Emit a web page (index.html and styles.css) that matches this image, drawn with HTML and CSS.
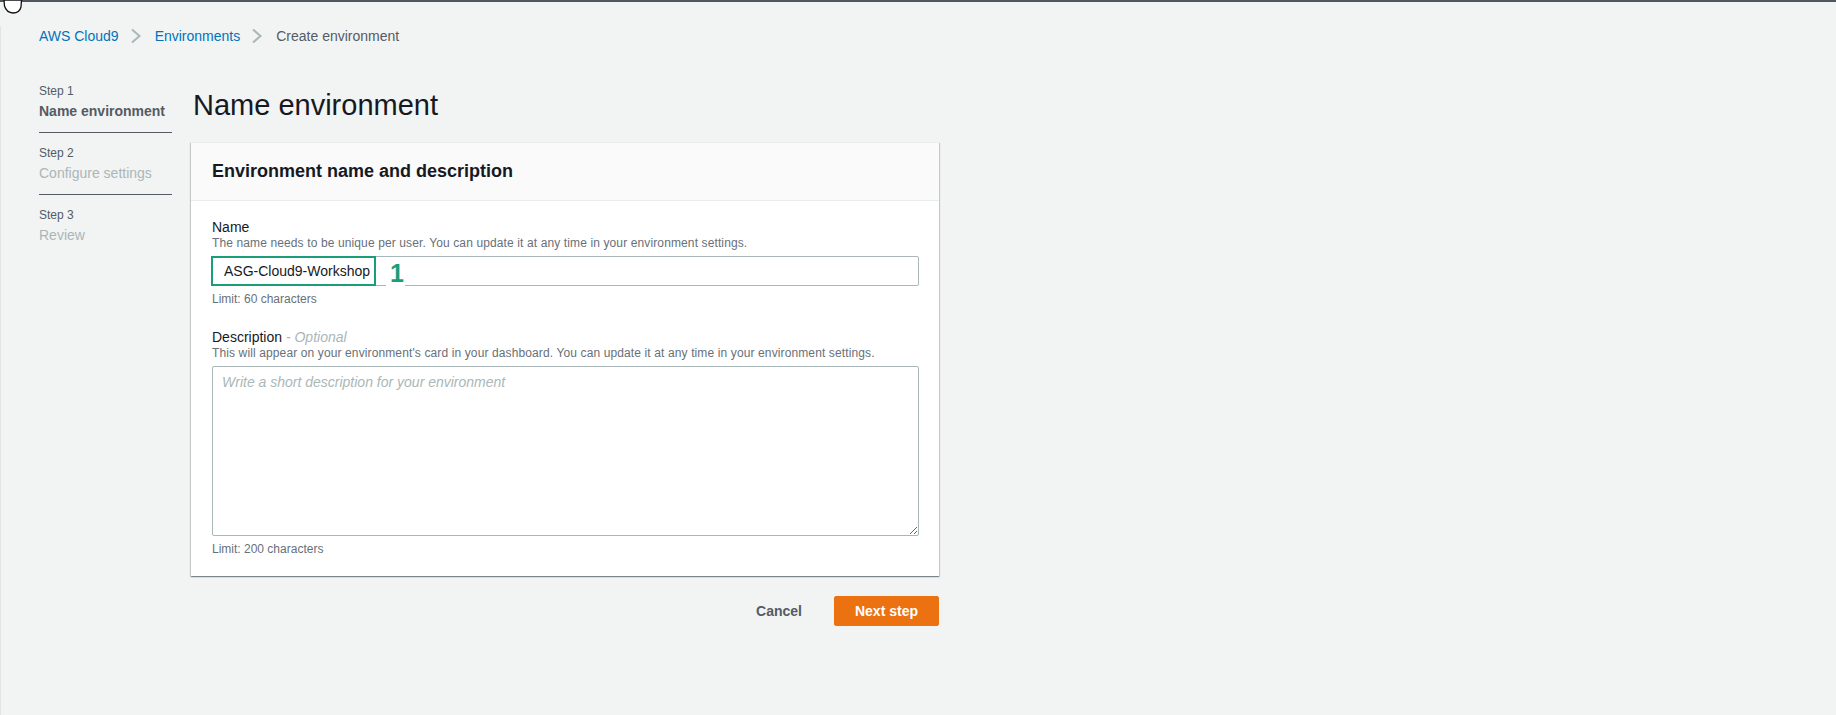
FILE: index.html
```html
<!DOCTYPE html>
<html>
<head>
    <title>Create environment - AWS Cloud9</title>
    <link rel="stylesheet" href="styles.css">
</head>
<body>
    <div class="topline"></div>

    <!-- mouse pointer resting on the top edge -->
    <svg class="pointer" width="24" height="15" viewBox="0 0 24 15">
        <path d="M4 0 L4.5 6 Q6.5 12.5 13 13 Q19.5 13 21 7 L21.5 0 Z" fill="#fff" stroke="#111" stroke-width="1.3"/>
    </svg>

    <div class="page">
        <nav class="breadcrumbs">
            <a href="#">AWS Cloud9</a>
            <svg class="chevron" width="16" height="16" viewBox="0 0 16 16"><polyline points="4,1.5 11.5,8 4,14.5"/></svg>
            <a href="#">Environments</a>
            <svg class="chevron" width="16" height="16" viewBox="0 0 16 16"><polyline points="4,1.5 11.5,8 4,14.5"/></svg>
            <span class="current">Create environment</span>
        </nav>

        <div class="layout">
            <ul class="steps">
                <li class="step active">
                    <span class="step-num">Step 1</span>
                    <span class="step-name">Name environment</span>
                </li>
                <li class="step">
                    <span class="step-num">Step 2</span>
                    <span class="step-name">Configure settings</span>
                </li>
                <li class="step">
                    <span class="step-num">Step 3</span>
                    <span class="step-name">Review</span>
                </li>
            </ul>

            <main class="content">
                <h1>Name environment</h1>

                <form class="card">
                    <div class="card-header">
                        <h2>Environment name and description</h2>
                    </div>
                    <div class="card-body">
                        <div class="field">
                            <label for="env_name">Name</label>
                            <p class="hint">The name needs to be unique per user. You can update it at any time in your environment settings.</p>
                            <div class="input-wrap">
                                <input type="text" id="env_name" value="ASG-Cloud9-Workshop">
                                <span class="callout-box"></span>
                                <span class="callout-num">1</span>
                            </div>
                            <p class="limit">Limit: 60 characters</p>
                        </div>

                        <div class="field field-desc">
                            <label for="env_desc">Description <i class="optional">- Optional</i></label>
                            <p class="hint">This will appear on your environment's card in your dashboard. You can update it at any time in your environment settings.</p>
                            <textarea id="env_desc" placeholder="Write a short description for your environment"></textarea>
                            <p class="limit">Limit: 200 characters</p>
                        </div>
                    </div>
                </form>

                <div class="actions">
                    <button type="button" class="btn-link">Cancel</button>
                    <button type="button" class="btn-primary">Next step</button>
                </div>
            </main>
        </div>
    </div>
</body>
</html>
```

FILE: styles.css
```css
* {
    box-sizing: border-box;
}

html, body {
    margin: 0;
    padding: 0;
}

body {
    font-family: 'Liberation Sans', Arial, sans-serif;
    font-size: 14px;
    color: #16191f;
    background: #f2f3f3;
    min-height: 100vh;
    position: relative;
}

.topline {
    height: 2px;
    background: #4f565f;
}

.pointer {
    position: absolute;
    top: 0;
    left: 0;
}

.page {
    min-height: calc(100vh - 2px);
    border-left: 1px solid #e1e4e4;
    padding-left: 38px;
}

/* breadcrumbs */
.breadcrumbs {
    display: flex;
    align-items: center;
    height: 20px;
    margin-top: 24px;
    line-height: 20px;
}

.breadcrumbs a {
    color: #0073bb;
    text-decoration: none;
}

.breadcrumbs .current {
    color: #545b64;
}

.chevron {
    margin: 0 11px 0 9px;
    fill: none;
    stroke: #aab7b8;
    stroke-width: 2;
}

/* wizard layout */
.layout {
    display: flex;
    gap: 19px;
    margin-top: 36px;
}

.steps {
    list-style: none;
    margin: 0;
    padding: 0;
    width: 133px;
}

.step {
    display: flex;
    flex-direction: column;
    padding: 11px 0 10px;
    border-bottom: 1px solid #545b64;
}

.step:first-child {
    padding-top: 0;
}

.step:last-child {
    border-bottom: none;
}

.step-num {
    font-size: 12px;
    line-height: 18px;
    color: #545b64;
}

.step-name {
    font-size: 14px;
    line-height: 22px;
    color: #aab7b8;
}

.step.active .step-name {
    color: #545b64;
    font-weight: bold;
}

.content {
    width: 748px;
}

h1 {
    font-size: 29px;
    line-height: 36px;
    font-weight: normal;
    margin: 5px 0 19px;
    padding-left: 2px;
    color: #16191f;
}

/* container card */
.card {
    background: #fff;
    border-top: 1px solid #eaeded;
    box-shadow: 0 1px 1px 0 rgba(0, 28, 36, 0.3), 1px 1px 1px 0 rgba(0, 28, 36, 0.15), -1px 1px 1px 0 rgba(0, 28, 36, 0.15);
}

.card-header {
    background: #fafafa;
    border-bottom: 1px solid #eaeded;
    padding: 18px 21px 19px;
}

.card-header h2 {
    margin: 0;
    font-size: 18px;
    line-height: 20px;
    font-weight: bold;
}

.card-body {
    padding: 18px 20px 19px 21px;
}

.field label {
    display: block;
    font-size: 14px;
    line-height: 16px;
}

.optional {
    color: #aab7b8;
}

.hint, .limit {
    margin: 0;
    font-size: 12px;
    line-height: 16px;
    color: #687078;
}

.hint {
    letter-spacing: 0.12px;
}

.limit {
    margin-top: 5px;
}

.field-desc {
    margin-top: 22px;
}

.input-wrap {
    position: relative;
    margin-top: 5px;
}

input[type="text"], textarea {
    display: block;
    width: 100%;
    font-family: inherit;
    font-size: 14px;
    color: #16191f;
    border: 1px solid #aab7b8;
    border-radius: 2px;
    outline: none;
    background: #fff;
}

input[type="text"] {
    height: 30px;
    padding: 0 11px;
}

textarea {
    height: 170px;
    margin-top: 5px;
    padding: 5px 9px;
    line-height: 20px;
    resize: vertical;
}

textarea::placeholder {
    color: #aab7b8;
    font-style: italic;
}

/* numbered highlight over the name input */
.callout-box {
    position: absolute;
    top: 0;
    left: -1px;
    width: 165px;
    height: 30px;
    border: 2px solid #1a9e7a;
}

.callout-num {
    position: absolute;
    top: 3px;
    left: 174px;
    padding: 0 1px 0 4px;
    background: #fff;
    color: #1a9e7a;
    font-size: 25px;
    font-weight: bold;
    line-height: 29px;
}

/* footer buttons */
.actions {
    display: flex;
    justify-content: flex-end;
    align-items: center;
    gap: 12px;
    margin-top: 20px;
}

.btn-link, .btn-primary {
    font-family: inherit;
    font-size: 14px;
    font-weight: bold;
    height: 30px;
    padding: 0 20px;
    border-radius: 2px;
    cursor: pointer;
}

.btn-link {
    background: none;
    border: none;
    color: #545b64;
}

.btn-primary {
    background: #ec7211;
    border: 1px solid #ec7211;
    color: #fff;
}
```
